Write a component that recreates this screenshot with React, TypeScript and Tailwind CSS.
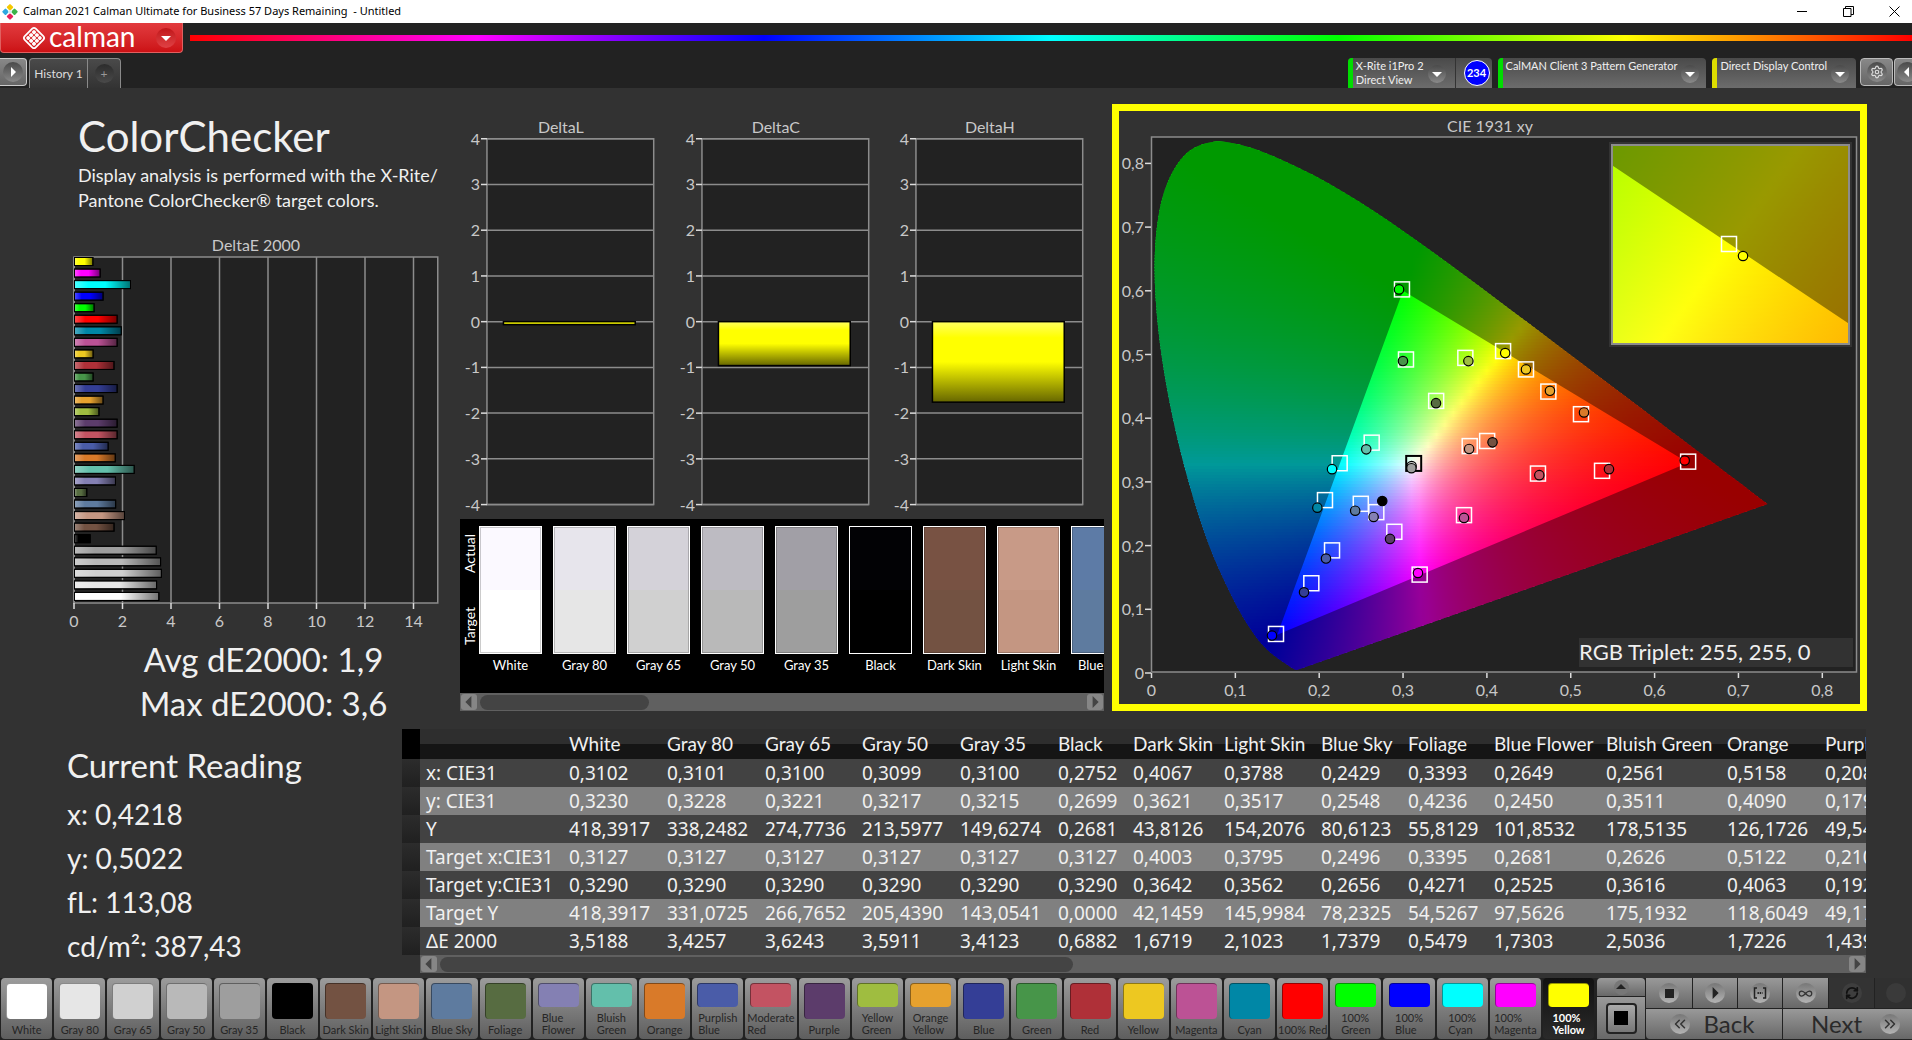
import type { ReactNode } from "react";
import { ChevronsLeft, ChevronsRight, Infinity as InfinityIcon, RefreshCw, Settings } from "lucide-react";

interface Patch {
  name: string;
  color: string;
  twoLine?: boolean;
}

const PATCHES: Patch[] = [
  { name: "White", color: "#ffffff" },
  { name: "Gray 80", color: "#e6e6e6" },
  { name: "Gray 65", color: "#d0d0d0" },
  { name: "Gray 50", color: "#b9b9b9" },
  { name: "Gray 35", color: "#9e9e9e" },
  { name: "Black", color: "#000000" },
  { name: "Dark Skin", color: "#735242" },
  { name: "Light Skin", color: "#c49682" },
  { name: "Blue Sky", color: "#5e7b9f" },
  { name: "Foliage", color: "#576c41" },
  { name: "Blue Flower", color: "#8480b3", twoLine: true },
  { name: "Bluish Green", color: "#63bfab", twoLine: true },
  { name: "Orange", color: "#d97a29" },
  { name: "Purplish Blue", color: "#4a5ca8", twoLine: true },
  { name: "Moderate Red", color: "#c35362", twoLine: true },
  { name: "Purple", color: "#5c3c6b" },
  { name: "Yellow Green", color: "#9fbd40", twoLine: true },
  { name: "Orange Yellow", color: "#e6a12e", twoLine: true },
  { name: "Blue", color: "#343e96" },
  { name: "Green", color: "#479549" },
  { name: "Red", color: "#af3038" },
  { name: "Yellow", color: "#edc821" },
  { name: "Magenta", color: "#bc5295" },
  { name: "Cyan", color: "#0087a6" },
  { name: "100% Red", color: "#ff0000" },
  { name: "100% Green", color: "#00ff00", twoLine: true },
  { name: "100% Blue", color: "#0000ff", twoLine: true },
  { name: "100% Cyan", color: "#00ffff", twoLine: true },
  { name: "100% Magenta", color: "#ff00ff", twoLine: true },
  { name: "100% Yellow", color: "#ffff00", twoLine: true },
];

// same order as PATCHES
const DELTA_E = [
  3.5188, 3.4257, 3.6243, 3.5911, 3.4123, 0.6882, 1.6719, 2.1023, 1.7379, 0.5479,
  1.7303, 2.5036, 1.7226, 1.43, 1.8, 1.8, 1.05, 1.22, 1.8, 0.81, 1.67, 0.81, 1.8,
  1.97, 1.8, 0.85, 1.22, 2.35, 1.1, 0.8,
];

const ACTUAL = [
  "#fbf9ff", "#e7e5ec", "#d4d2d9", "#bdbbc2", "#a19fa6", "#020205", "#785243", "#c89a87", "#5d7ba6",
];

// target x, target y, actual x, actual y
const POINTS: [string, number, number, number, number][] = [
  ["#735242", 0.4003, 0.3642, 0.4067, 0.3621],
  ["#c49682", 0.3795, 0.3562, 0.3788, 0.3517],
  ["#5e7b9f", 0.2496, 0.2656, 0.2429, 0.2548],
  ["#576c41", 0.3395, 0.4271, 0.3393, 0.4236],
  ["#8480b3", 0.2681, 0.2525, 0.2649, 0.245],
  ["#63bfab", 0.2626, 0.3616, 0.2561, 0.3511],
  ["#d97a29", 0.5122, 0.4063, 0.5158, 0.409],
  ["#4a5ca8", 0.2153, 0.1925, 0.2081, 0.1797],
  ["#c35362", 0.4609, 0.3131, 0.4625, 0.3106],
  ["#5c3c6b", 0.2896, 0.2217, 0.2845, 0.2105],
  ["#9fbd40", 0.3743, 0.4947, 0.3779, 0.4896],
  ["#e6a12e", 0.4733, 0.4418, 0.4752, 0.443],
  ["#343e96", 0.1906, 0.1409, 0.1819, 0.1266],
  ["#479549", 0.3035, 0.4922, 0.2999, 0.4897],
  ["#af3038", 0.5373, 0.3174, 0.5456, 0.32],
  ["#edc821", 0.4466, 0.4766, 0.4466, 0.4766],
  ["#bc5295", 0.3727, 0.2478, 0.3727, 0.2435],
  ["#0087a6", 0.2069, 0.2714, 0.1978, 0.2596],
  ["#ff0000", 0.64, 0.3318, 0.6359, 0.3336],
  ["#00ff00", 0.2987, 0.6022, 0.2952, 0.6022],
  ["#0000ff", 0.1485, 0.0613, 0.1437, 0.0588],
  ["#00ffff", 0.2244, 0.3293, 0.2153, 0.32],
  ["#ff00ff", 0.3198, 0.1545, 0.3178, 0.157],
  ["#ffff00", 0.4193, 0.5053, 0.4218, 0.5022],
];

// CIE 1931 2 degree spectral locus
const LOCUS: [number, number][] = [
  [0.1741, 0.005], [0.1726, 0.0048], [0.1703, 0.0058], [0.1669, 0.0086], [0.1611, 0.0138],
  [0.151, 0.0227], [0.144, 0.0297], [0.1355, 0.0399], [0.1241, 0.0578],
  [0.1096, 0.0868], [0.0913, 0.1327], [0.0687, 0.2007], [0.0454, 0.295], [0.0235, 0.4127],
  [0.0082, 0.5384], [0.0039, 0.6548], [0.0139, 0.7502], [0.0389, 0.812], [0.0743, 0.8338],
  [0.1142, 0.8262], [0.1547, 0.8059], [0.1929, 0.7816], [0.2296, 0.7543], [0.2658, 0.7243],
  [0.3016, 0.6923], [0.3373, 0.6589], [0.3731, 0.6245], [0.4087, 0.5896], [0.4441, 0.5547],
  [0.4788, 0.5202], [0.5125, 0.4866], [0.5448, 0.4544], [0.5752, 0.4242], [0.6029, 0.3965],
  [0.627, 0.3725], [0.6482, 0.3514], [0.6658, 0.334], [0.6915, 0.3083], [0.714, 0.2859],
  [0.7347, 0.2653],
];

const COLUMNS = [
  { name: "White", width: 98, values: ["0,3102", "0,3230", "418,3917", "0,3127", "0,3290", "418,3917", "3,5188"] },
  { name: "Gray 80", width: 98, values: ["0,3101", "0,3228", "338,2482", "0,3127", "0,3290", "331,0725", "3,4257"] },
  { name: "Gray 65", width: 97, values: ["0,3100", "0,3221", "274,7736", "0,3127", "0,3290", "266,7652", "3,6243"] },
  { name: "Gray 50", width: 98, values: ["0,3099", "0,3217", "213,5977", "0,3127", "0,3290", "205,4390", "3,5911"] },
  { name: "Gray 35", width: 98, values: ["0,3100", "0,3215", "149,6274", "0,3127", "0,3290", "143,0541", "3,4123"] },
  { name: "Black", width: 75, values: ["0,2752", "0,2699", "0,2681", "0,3127", "0,3290", "0,0000", "0,6882"] },
  { name: "Dark Skin", width: 91, values: ["0,4067", "0,3621", "43,8126", "0,4003", "0,3642", "42,1459", "1,6719"] },
  { name: "Light Skin", width: 97, values: ["0,3788", "0,3517", "154,2076", "0,3795", "0,3562", "145,9984", "2,1023"] },
  { name: "Blue Sky", width: 87, values: ["0,2429", "0,2548", "80,6123", "0,2496", "0,2656", "78,2325", "1,7379"] },
  { name: "Foliage", width: 86, values: ["0,3393", "0,4236", "55,8129", "0,3395", "0,4271", "54,5267", "0,5479"] },
  { name: "Blue Flower", width: 112, values: ["0,2649", "0,2450", "101,8532", "0,2681", "0,2525", "97,5626", "1,7303"] },
  { name: "Bluish Green", width: 121, values: ["0,2561", "0,3511", "178,5135", "0,2626", "0,3616", "175,1932", "2,5036"] },
  { name: "Orange", width: 98, values: ["0,5158", "0,4090", "126,1726", "0,5122", "0,4063", "118,6049", "1,7226"] },
  { name: "Purplish Blue", width: 130, values: ["0,2081", "0,1797", "49,5431", "0,2106", "0,1925", "49,1720", "1,4391"] },
];

const ROW_LABELS = ["x: CIE31", "y: CIE31", "Y", "Target x:CIE31", "Target y:CIE31", "Target Y", "ΔE 2000"];

const READINGS = ["x: 0,4218", "y: 0,5022", "fL: 113,08", "cd/m²: 387,43"];

const ROUND = "flex items-center justify-center rounded-full bg-gradient-to-b from-[#4a4a4a] to-[#8a8a8a]";

function Triangle({ dir, size = 10, fill = "#fff" }: { dir: "left" | "right" | "up" | "down"; size?: number; fill?: string }) {
  const points = {
    left: "7,0 7,10 2,5",
    right: "3,0 3,10 8,5",
    up: "0,7 10,7 5,2",
    down: "0,3 10,3 5,8",
  }[dir];
  return (
    <svg width={size} height={size} viewBox="0 0 10 10">
      <polygon points={points} fill={fill} />
    </svg>
  );
}

function TitleBar() {
  return (
    <header className="flex h-[23px] items-center bg-white pl-[2px] font-['Noto_Sans',sans-serif] text-[11px] text-black">
      <svg width="16" height="16" viewBox="0 0 16 16">
        <rect x="5.5" y="0.8" width="5" height="5" rx="1" fill="#f5c800" transform="rotate(45 8 3.3)" />
        <rect x="10" y="5.3" width="5" height="5" rx="1" fill="#3cb44a" transform="rotate(45 12.5 7.8)" />
        <rect x="1" y="5.3" width="5" height="5" rx="1" fill="#2fa8e0" transform="rotate(45 3.5 7.8)" />
        <rect x="5.5" y="10" width="5" height="5" rx="1" fill="#e8205a" transform="rotate(45 8 12.5)" />
        <rect x="6.5" y="6.3" width="3" height="3" fill="#d8eef0" transform="rotate(45 8 7.8)" />
      </svg>
      <h1 className="ml-[5px] whitespace-pre">Calman 2021 Calman Ultimate for Business 57 Days Remaining  - Untitled</h1>
      <div className="-mr-[5px] ml-auto flex">
        <button type="button" aria-label="Minimize" className="flex w-[46px] justify-center">
          <svg width="11" height="11" viewBox="0 0 11 11"><path d="M0 5.5h10" stroke="#000" /></svg>
        </button>
        <button type="button" aria-label="Restore" className="flex w-[46px] justify-center">
          <svg width="11" height="11" viewBox="0 0 11 11" fill="none" stroke="#000">
            <path d="M.5 2.5h7.500v8h-7.500zM2.500 2.500v-2h8v8h-2.500" />
          </svg>
        </button>
        <button type="button" aria-label="Close" className="flex w-[46px] justify-center">
          <svg width="11" height="11" viewBox="0 0 11 11"><path d="M.5.5l10 10M10.500.5l-10 10" stroke="#000" /></svg>
        </button>
      </div>
    </header>
  );
}

// white rounded diamond outline around a grid of nine tiles
function Logo() {
  const steps = [0, 1, 2];
  return (
    <svg width="24" height="24" viewBox="0 0 24 24">
      <g transform="rotate(45 12 12)">
        <rect x="4.200" y="4.200" width="15.600" height="15.600" rx="2.500" fill="none" stroke="#fff" strokeWidth="1.800" />
        {steps.map((r) =>
          steps.map((c) => (
            <rect key={`${r}${c}`} x={6.1 + c * 4.1} y={6.1 + r * 4.1} width="3.600" height="3.600" rx="1.200" fill="#fff" />
          )),
        )}
      </g>
    </svg>
  );
}

function Device({ lines, bar, children }: { lines: string[]; bar: string; children?: ReactNode }) {
  return (
    <div className="flex h-[30px] rounded-t-[4px] bg-gradient-to-b from-[#4a4a4a] to-[#6c6c6c]">
      <span className={`w-[5px] rounded-tl-[4px] ${bar}`} />
      <button type="button" className="flex pl-[3px] text-left text-[11px] leading-[14px] text-[#f0f0f0]">
        <span className="pt-px">
          {lines.map((line) => (
            <span key={line} className="block whitespace-nowrap">{line}</span>
          ))}
        </span>
        <span className={`mt-[7px] mr-[7px] ml-[4px] size-[18px] ${ROUND}`}>
          <Triangle dir="down" />
        </span>
      </button>
      {children}
    </div>
  );
}

function Toolbar() {
  return (
    <div className="bg-[#222]">
      <div className="flex h-[35px] items-start">
        <button
          type="button"
          className="flex h-[30px] w-[183px] items-center rounded-b-[4px] border border-t-0 border-[#e06060] bg-gradient-to-b from-[#e23a3e] to-[#cc1014] pl-[21px] text-white"
        >
          <Logo />
          <span className="ml-[3px] pb-[4px] text-[28px] leading-[26px]">calman</span>
          <span className="mr-[6px] ml-auto flex size-[20px] items-center justify-center rounded-full bg-gradient-to-b from-[#c01418] to-[#e04044]">
            <Triangle dir="down" />
          </span>
        </button>
        <div className="mt-[12px] ml-[7px] h-[6px] flex-1 bg-[linear-gradient(to_right,#f00,#f0f,#00f,#0ff,#0f0,#ff0,#f00)]" />
      </div>
      <div className="flex h-[30px]">
        <button type="button" aria-label="Expand" className="flex h-[28px] w-[27px] items-center rounded-r-[4px] border border-l-0 border-[#ccc] bg-gradient-to-b from-[#888] to-[#666] pl-[3px]">
          <span className={`size-[20px] ${ROUND}`}>
            <Triangle dir="right" />
          </span>
        </button>
        <div className="ml-[2px] flex rounded-t-[4px] border border-b-0 border-[#8a8a8a] bg-gradient-to-b from-[#4a4a4a] to-[#333] text-[12px] text-[#ddd]">
          <button type="button" className="w-[58px] border-r border-[#8a8a8a]">History 1</button>
          <button type="button" aria-label="Add history" className="flex w-[32px] items-center justify-center">
            <span className="flex size-[19px] items-center justify-center rounded-full bg-gradient-to-b from-[#2c2c2c] to-[#4a4a4a] leading-[16px] text-[#999]">+</span>
          </button>
        </div>
        <div className="ml-auto flex gap-[6px]">
          <Device lines={["X-Rite i1Pro 2", "Direct View"]} bar="bg-[#0d0]">
            <span className="ml-[2px] border-l border-[#333]" />
            <span className="mt-[2px] mr-[2px] ml-[8px] flex size-[26px] items-center justify-center rounded-full border border-white bg-[#00f] text-[11px] font-bold text-white">
              234
            </span>
          </Device>
          <Device lines={["CalMAN Client 3 Pattern Generator"]} bar="bg-[#0d0]" />
          <Device lines={["Direct Display Control"]} bar="bg-[#dd0]" />
          <div className="-ml-[2px] flex h-[28px]">
            <button type="button" aria-label="Settings" className="flex w-[33px] items-center justify-center rounded-[4px] border border-[#bbb] bg-gradient-to-b from-[#888] to-[#666]">
              <span className={`size-[20px] ${ROUND}`}>
                <Settings size={14} color="#ddd" />
              </span>
            </button>
            <button type="button" aria-label="Collapse" className="ml-px flex w-[18px] items-center overflow-hidden rounded-l-[4px] border border-r-0 border-[#bbb] bg-gradient-to-b from-[#888] to-[#666] pl-[2px]">
              <span className={`size-[20px] shrink-0 ${ROUND}`}>
                <Triangle dir="left" />
              </span>
            </button>
          </div>
        </div>
      </div>
    </div>
  );
}

function DeltaEChart() {
  const left = 14;
  const top = 24;
  const bottom = 370;
  const unit = 24.25;
  const bars = PATCHES.map((p, i) => ({ color: p.color, value: DELTA_E[i] })).reverse();
  return (
    <svg viewBox="0 0 390 400" className="mt-5 ml-[60px] w-[390px] text-[16px]" fill="#c8c8c8">
      <defs>
        <linearGradient id="barH">
          <stop offset="0" stopColor="#fff" stopOpacity="0.3" />
          <stop offset="0.25" stopColor="#fff" stopOpacity="0" />
          <stop offset="0.55" stopColor="#000" stopOpacity="0" />
          <stop offset="1" stopColor="#000" stopOpacity="0.55" />
        </linearGradient>
      </defs>
      <text x="196" y="18" textAnchor="middle">DeltaE 2000</text>
      <rect x={left} y={top} width={15 * unit} height={bottom - top} fill="#222" stroke="#8c8c8c" strokeWidth="1.500" />
      {[0, 2, 4, 6, 8, 10, 12, 14].map((v) => (
        <g key={v}>
          <line x1={left + v * unit} x2={left + v * unit} y1={top} y2={bottom} stroke="#8c8c8c" strokeWidth="1.500" />
          <line x1={left + v * unit} x2={left + v * unit} y1={bottom} y2={bottom + 6} stroke="#ddd" strokeWidth="1.500" />
          <text x={left + v * unit} y="394" textAnchor="middle">{v}</text>
        </g>
      ))}
      {bars.map((bar, i) => (
        <g key={i} stroke="#000">
          <rect x={left + 0.5} y={24.5 + i * 11.55} width={bar.value * unit - 1} height="8" fill={bar.color} />
          <rect x={left + 0.5} y={24.5 + i * 11.55} width={bar.value * unit - 1} height="8" fill="url(#barH)" />
        </g>
      ))}
    </svg>
  );
}

function DeltaChart({ title, value }: { title: string; value: number }) {
  const zero = 218;
  const unit = 45.8;
  const height = Math.max(3, -value * unit);
  return (
    <svg viewBox="0 0 215 416" className="min-w-0 flex-1 text-[16px]" fill="#c8c8c8">
      <defs>
        <linearGradient id="barV" x1="0" y1="0" x2="0" y2="1">
          <stop offset="0" stopColor="#ffff60" />
          <stop offset="0.2" stopColor="#ffff00" />
          <stop offset="0.5" stopColor="#ffff00" />
          <stop offset="1" stopColor="#666600" />
        </linearGradient>
      </defs>
      <text x="101" y="29" textAnchor="middle">{title}</text>
      <rect x="27" y={zero - 4 * unit} width="167" height={8 * unit} fill="#222" stroke="#8c8c8c" strokeWidth="1.500" />
      {[4, 3, 2, 1, 0, -1, -2, -3, -4].map((v) => (
        <g key={v}>
          <line x1="27" x2="194" y1={zero - v * unit} y2={zero - v * unit} stroke="#8c8c8c" strokeWidth="1.500" />
          <line x1="21" x2="27" y1={zero - v * unit} y2={zero - v * unit} stroke="#ddd" strokeWidth="1.500" />
          <text x="20" y={zero - v * unit + 6} textAnchor="end">{v}</text>
        </g>
      ))}
      <rect x="43.500" y={zero} width="132" height={height} fill="url(#barV)" stroke="#000" strokeWidth="1.500" />
    </svg>
  );
}

function ScrollBar({ thumb }: { thumb: string }) {
  return (
    <div className="flex h-[18px] items-center bg-[#606060] px-px">
      <button type="button" aria-label="Scroll left" className="flex size-[16px] items-center justify-center rounded-[3px] bg-[#868686]">
        <Triangle dir="left" size={12} fill="#444" />
      </button>
      <div className="mx-[3px] h-[15px] flex-1">
        <div className={`h-full rounded-full bg-[#444] ${thumb}`} />
      </div>
      <button type="button" aria-label="Scroll right" className="flex size-[16px] items-center justify-center rounded-[3px] bg-[#868686]">
        <Triangle dir="right" size={12} fill="#444" />
      </button>
    </div>
  );
}

function SwatchStrip() {
  return (
    <div>
      <div className="flex h-[174px] bg-black pt-[7px] text-white">
        <div className="flex h-[128px] w-[19px] shrink-0 rotate-180 items-center justify-between pt-[9px] pb-[8px] text-[14px] [writing-mode:vertical-rl]">
          <span>Target</span>
          <span>Actual</span>
        </div>
        <div className="flex min-w-0 gap-[11px] overflow-hidden">
          {ACTUAL.map((actual, i) => (
            <div key={actual} className="flex w-[63px] shrink-0 flex-col items-center">
              <div className="flex h-[128px] w-full flex-col border border-white">
                <div className="flex-1 border border-b-0 border-black/20" style={{ backgroundColor: actual }} />
                <div className="flex-1 border border-t-0 border-black/20" style={{ backgroundColor: PATCHES[i].color }} />
              </div>
              <span className="mt-[2px] text-[13px] leading-[18px] whitespace-nowrap">{PATCHES[i].name}</span>
            </div>
          ))}
        </div>
      </div>
      <ScrollBar thumb="w-[28%]" />
    </div>
  );
}

// linear sRGB at full brightness for a chromaticity
function rgbAt(x: number, y: number) {
  const z = 1 - x - y;
  const rgb = [
    3.2406 * x - 1.5372 * y - 0.4986 * z,
    -0.9689 * x + 1.8758 * y + 0.0415 * z,
    0.0557 * x - 0.204 * y + 1.057 * z,
  ].map((c) => Math.max(0, c));
  const max = Math.max(...rgb);
  return `rgb(${rgb.map((c) => Math.round((c / max) * 255)).join(",")})`;
}

interface FieldProps {
  id: string;
  x: [number, number];
  y: [number, number];
  toX: (x: number) => number;
  toY: (y: number) => number;
  rows: number;
  stops: number;
}

// stacks thin horizontal gradients, one for each line of constant y
function ColorField({ id, x, y, toX, toY, rows, stops }: FieldProps) {
  const rowHeight = (toY(y[0]) - toY(y[1])) / rows;
  return (
    <>
      {Array.from({ length: rows }, (_, r) => {
        const cy = y[1] - ((r + 0.5) / rows) * (y[1] - y[0]);
        return (
          <g key={r}>
            <linearGradient id={`${id}${r}`}>
              {Array.from({ length: stops + 1 }, (_, s) => (
                <stop key={s} offset={s / stops} stopColor={rgbAt(x[0] + (s / stops) * (x[1] - x[0]), cy)} />
              ))}
            </linearGradient>
            <rect
              x={toX(x[0])}
              y={toY(y[1]) + r * rowHeight}
              width={toX(x[1]) - toX(x[0])}
              height={rowHeight + 1}
              fill={`url(#${id}${r})`}
              shapeRendering="crispEdges"
            />
          </g>
        );
      })}
    </>
  );
}

function Target({ x, y }: { x: number; y: number }) {
  return <rect x={x - 7.5} y={y - 7.5} width="15" height="15" fill="none" stroke="#fff" strokeWidth="1.500" />;
}

function Reading({ x, y, fill }: { x: number; y: number; fill: string }) {
  return <circle cx={x} cy={y} r="4.700" fill={fill} stroke="#000" strokeWidth="1.200" />;
}

function CieChart() {
  const px = (x: number) => 32.5 + 838.5 * x;
  const py = (y: number) => 562 - 637 * y;
  const zx = (x: number) => 611 + (x - 0.4193) * 5000;
  const zy = (y: number) => 133 - (y - 0.5053) * 4215;
  // Catmull-Rom through the samples, written as cubic segments
  const pts = LOCUS.map(([x, y]) => [px(x), py(y)]);
  const outline = pts
    .slice(0, -1)
    .map(([x1, y1], i) => {
      const [x0, y0] = pts[Math.max(0, i - 1)];
      const [x2, y2] = pts[i + 1];
      const [x3, y3] = pts[Math.min(pts.length - 1, i + 2)];
      return `C${x1 + (x2 - x0) / 6},${y1 + (y2 - y0) / 6} ${x2 - (x3 - x1) / 6},${y2 - (y3 - y1) / 6} ${x2},${y2}`;
    })
    .join("");
  const locus = `M${pts[0][0]},${pts[0][1]}${outline}Z`;
  const triangle = (fx: typeof px, fy: typeof py) => `M${fx(0.64)},${fy(0.33)}L${fx(0.3)},${fy(0.6)}L${fx(0.15)},${fy(0.06)}Z`;
  const ticks = [0, 1, 2, 3, 4, 5, 6, 7, 8];
  const label = (t: number) => (t === 0 ? "0" : `0,${t}`);

  return (
    <section className="min-w-0 flex-1 border-[7px] border-[#ff0]">
      <svg viewBox="0 0 741 593" className="block w-full text-[16px]" fill="#c8c8c8">
        <defs>
          <clipPath id="locus"><path d={locus} /></clipPath>
          <clipPath id="zoom"><rect x="493" y="34" width="237" height="199" /></clipPath>
        </defs>
        <text x="371" y="21" textAnchor="middle">CIE 1931 xy</text>
        <rect x="32.500" y="26" width="705" height="535" fill="#222" stroke="#8c8c8c" strokeWidth="1.500" />
        {ticks.map((t) => (
          <g key={t}>
            <line x1={px(t / 10)} x2={px(t / 10)} y1="562" y2="567" stroke="#ddd" strokeWidth="1.500" />
            <text x={px(t / 10)} y="585" textAnchor="middle">{label(t)}</text>
            <line x1="26" x2="32" y1={py(t / 10)} y2={py(t / 10)} stroke="#ddd" strokeWidth="1.500" />
            <text x="25" y={py(t / 10) + 6} textAnchor="end">{label(t)}</text>
          </g>
        ))}
        <g clipPath="url(#locus)">
          <ColorField id="field" x={[0, 0.74]} y={[0, 0.84]} toX={px} toY={py} rows={178} stops={74} />
          <path d={`M0,0H741V593H0Z${triangle(px, py)}`} fillRule="evenodd" fillOpacity="0.400" fill="#000" />
        </g>
        {POINTS.map(([color, tx, ty, ax, ay]) => (
          <g key={color}>
            <Target x={px(tx)} y={py(ty)} />
            <Reading x={px(ax)} y={py(ay)} fill={color} />
          </g>
        ))}
        <Reading x={px(0.2752)} y={py(0.2699)} fill="#000" />
        <rect x={px(0.3127) - 7.5} y={py(0.329) - 7.5} width="15" height="15" fill="none" stroke="#000" strokeWidth="2" />
        <Reading x={px(0.3102)} y={py(0.325)} fill="#d0d0d0" />
        <Reading x={px(0.31)} y={py(0.3215)} fill="#9e9e9e" />

        <rect x="490" y="31" width="243" height="205" fill="#333" />
        <g clipPath="url(#zoom)">
          <ColorField id="inset" x={[0.395, 0.4435]} y={[0.481, 0.5295]} toX={zx} toY={zy} rows={102} stops={48} />
          <path d={`M490,30H740V240H490Z${triangle(zx, zy)}`} fillRule="evenodd" fillOpacity="0.400" fill="#000" />
        </g>
        <rect x="493" y="34" width="237" height="199" fill="none" stroke="#8c8c8c" strokeWidth="2" />
        <Target x={zx(0.4191)} y={zy(0.5053)} />
        <Reading x={624} y={145} fill="#ff0" />

        <rect x="460" y="527" width="274" height="29" fill="#323232" />
        <text x="460" y="549" className="text-[22px]" fill="#f0f0f0">RGB Triplet: 255, 255, 0</text>
      </svg>
    </section>
  );
}

function ResultsTable() {
  return (
    <div className="mr-[46px] flex min-w-0 flex-1">
      <div className="w-[18px] shrink-0">
        <div className="h-[30px] bg-black" />
        {ROW_LABELS.map((label) => (
          <div key={label} className="h-[28px] bg-gradient-to-b from-[#2c2c2c] to-[#202020]" />
        ))}
      </div>
      <div className="min-w-0 flex-1">
        <div className="overflow-hidden">
          <table className="w-[1519px] table-fixed border-collapse text-left font-['Noto_Sans',sans-serif] text-[#f0f0f0]">
            <colgroup>
              <col className="w-[143px]" />
              {COLUMNS.map((c) => (
                <col key={c.name} style={{ width: c.width }} />
              ))}
            </colgroup>
            <thead>
              <tr className="h-[30px] bg-[linear-gradient(#2e2e2e_50%,#151515_50%)] font-['Lato',sans-serif] text-[19px] leading-[30px]">
                <td />
                {COLUMNS.map((c) => (
                  <th key={c.name} scope="col" className="p-0 pl-[6px] font-normal whitespace-nowrap">{c.name}</th>
                ))}
              </tr>
            </thead>
            <tbody>
              {ROW_LABELS.map((label, r) => (
                <tr key={label} className="h-[28px] text-[19px] leading-[28px] odd:bg-[#424242] even:bg-[#808080]">
                  <th scope="row" className="p-0 pl-[6px] font-normal whitespace-nowrap">{label}</th>
                  {COLUMNS.map((c) => (
                    <td key={c.name} className="p-0 pl-[6px]">{c.values[r]}</td>
                  ))}
                </tr>
              ))}
            </tbody>
          </table>
        </div>
        <ScrollBar thumb="w-[45%]" />
      </div>
    </div>
  );
}

function PatchButton({ patch, selected }: { patch: Patch; selected: boolean }) {
  return (
    <button
      type="button"
      className={`flex h-[61px] min-w-0 flex-1 flex-col items-center rounded-[4px] pt-[5px] text-[11px] leading-[12px] ${
        selected
          ? "bg-gradient-to-b from-[#111] to-[#2a2a2a] font-bold text-white"
          : "bg-gradient-to-b from-[#9c9c9c] to-[#5e5e5e] text-[#262626]"
      }`}
    >
      <span
        className={`w-[41px] rounded-[4px] border-t border-l border-black/40 ${patch.twoLine ? "h-[24px]" : "h-[36px]"}`}
        style={{ backgroundColor: patch.color }}
      />
      <span className={`mt-[5px] text-left ${patch.twoLine ? "w-min" : "whitespace-nowrap"}`}>{patch.name}</span>
    </button>
  );
}

const KEY = "flex items-center justify-center bg-gradient-to-b from-[#999] to-[#686868]";
const KNOB = "flex size-[20px] items-center justify-center rounded-full bg-gradient-to-b from-[#777] to-[#b4b4b4] text-[#333]";

function Transport() {
  return (
    <div className="ml-[3px] flex w-[315px] gap-px">
      <div className="flex w-[48px] flex-col gap-px">
        <button type="button" aria-label="More patterns" className={`h-[18px] rounded-t-[4px] ${KEY}`}>
          <span className="flex size-[15px] items-center justify-center rounded-full bg-[#777]">
            <Triangle dir="up" fill="#222" />
          </span>
        </button>
        <button type="button" aria-label="Pattern window" className={`h-[42px] ${KEY}`}>
          <span className="flex size-[31px] items-center justify-center rounded-[4px] border-2 border-[#222] bg-gradient-to-b from-[#aaa] to-[#777]">
            <span className="size-[14px] bg-black" />
          </span>
        </button>
      </div>
      <div className="flex min-w-0 flex-1 flex-col gap-px">
        <div className="grid h-[30px] grid-cols-[46px_44px_44px_45px_45px_42px] gap-px overflow-hidden">
          <button type="button" aria-label="Stop" className={KEY}>
            <span className={KNOB}><span className="size-[9px] bg-[#222]" /></span>
          </button>
          <button type="button" aria-label="Play" className={KEY}>
            <span className={KNOB}><Triangle dir="right" size={12} fill="#222" /></span>
          </button>
          <button type="button" aria-label="Read series" className={KEY}>
            <span className={KNOB}>
              <svg width="14" height="12" viewBox="0 0 14 12" fill="none" stroke="#222" strokeWidth="1.500">
                <path d="M4 1H1.500v10H4M10 1h2.500v10H10" />
                <path d="M4.500 6h5" strokeDasharray="1.400 .8" strokeWidth="2" />
              </svg>
            </span>
          </button>
          <button type="button" aria-label="Read continuously" className={KEY}>
            <span className={KNOB}><InfinityIcon size={15} /></span>
          </button>
          <button type="button" aria-label="Refresh" disabled className="flex items-center justify-center bg-[#333]">
            <span className="flex size-[20px] items-center justify-center rounded-full bg-[#3e3e3e] text-[#111]"><RefreshCw size={14} strokeWidth={3} /></span>
          </button>
          <button type="button" aria-label="Unused" disabled className="flex items-center justify-center bg-[#303030]">
            <span className="size-[20px] rounded-full bg-[#3a3a3a]" />
          </button>
        </div>
        <div className="grid h-[30px] grid-cols-[136px_1fr] gap-px text-[24px] leading-[30px] text-[#2a2a2a]">
          <button type="button" className={`gap-[14px] rounded-bl-[4px] pr-[4px] ${KEY}`}>
            <span className={KNOB}><ChevronsLeft size={18} /></span>
            Back
          </button>
          <button type="button" className={`gap-[18px] pl-[16px] ${KEY}`}>
            Next
            <span className={KNOB}><ChevronsRight size={18} /></span>
          </button>
        </div>
      </div>
    </div>
  );
}

export default function App() {
  return (
    <div className="min-h-screen overflow-hidden bg-[#323232] font-['Lato',sans-serif]">
      <TitleBar />
      <Toolbar />
      <main className="flex flex-col gap-1 pt-4 text-[#f0f0f0]">
        <div className="flex items-start">
          <section className="w-[460px] shrink-0 pt-[7px]">
            <h2 className="ml-[78px] text-[42px] leading-[50px]">ColorChecker</h2>
            <p className="mt-[2px] ml-[78px] text-[18px] leading-[25px]">
              Display analysis is performed with the X-Rite/
              <br />
              Pantone ColorChecker® target colors.
            </p>
            <DeltaEChart />
            <div className="mt-[4px] ml-[67px] text-center text-[33px] leading-[44px]">
              <p>Avg dE2000: 1,9</p>
              <p>Max dE2000: 3,6</p>
            </div>
          </section>
          <section className="mr-[8px] w-[644px] shrink-0">
            <div className="flex">
              <DeltaChart title="DeltaL" value={-0.06} />
              <DeltaChart title="DeltaC" value={-0.96} />
              <DeltaChart title="DeltaH" value={-1.76} />
            </div>
            <SwatchStrip />
          </section>
          <CieChart />
          <div className="w-[45px] shrink-0" />
        </div>
        <div className="flex">
          <section className="w-[402px] shrink-0 pt-4 pl-[67px]">
            <h2 className="text-[33px] leading-[40px]">Current Reading</h2>
            <div className="mt-[7px] text-[28px] leading-[44px]">
              {READINGS.map((reading) => (
                <p key={reading}>{reading}</p>
              ))}
            </div>
          </section>
          <ResultsTable />
        </div>
      </main>
      <footer className="mt-[5px] flex h-[62px] bg-[#222]">
        <div className="flex min-w-0 flex-1 gap-[2px] pl-px">
          {PATCHES.map((patch) => (
            <PatchButton key={patch.name} patch={patch} selected={patch.name === "100% Yellow"} />
          ))}
        </div>
        <Transport />
      </footer>
    </div>
  );
}
